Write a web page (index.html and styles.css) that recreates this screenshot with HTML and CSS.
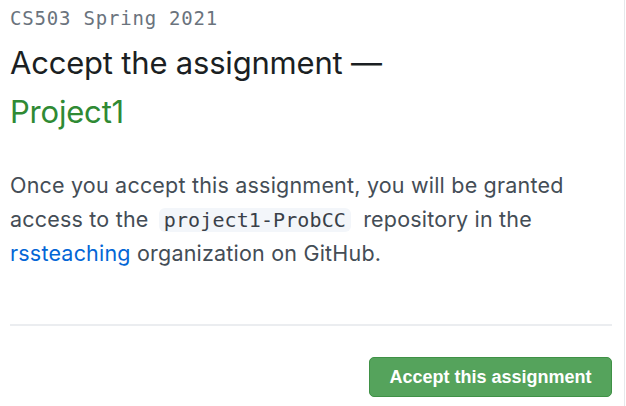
FILE: index.html
```html
<!DOCTYPE html>
<html>
<head>
<meta charset="utf-8">
<link rel="stylesheet" href="styles.css">
</head>
<body>
<div class="panel">
  <div class="course">CS503 Spring 2021</div>
  <h1 class="title">Accept the assignment —<span class="project">Project1</span></h1>
  <p class="desc">Once you accept this assignment, you will be granted access to the <code class="repo">project1-ProbCC</code> repository in the <a class="org" href="#">rssteaching</a> organization on GitHub.</p>
  <hr class="sep">
  <div class="actions">
    <button class="btn">Accept this assignment</button>
  </div>
</div>
</body>
</html>
```
FILE: styles.css
```css
html, body {
  margin: 0;
  padding: 0;
  background: #fff;
}
body {
  font-family: Inter, "Liberation Sans", Arial, sans-serif;
  width: 626px;
  height: 406px;
  overflow: hidden;
}
.panel {
  box-sizing: border-box;
  width: 625px;
  height: 406px;
  border-right: 1px solid #e6e8eb;
  padding: 5px 12px 0 10px;
}
.course {
  font-family: "DejaVu Sans Mono", monospace;
  font-size: 19px;
  line-height: 26px;
  color: #6a737d;
  letter-spacing: 0.8px;
}
.title {
  margin: 7px 0 0;
  font-size: 31px;
  font-weight: 400;
  line-height: 49px;
  color: #1b1f23;
  letter-spacing: -0.2px;
}
.project {
  display: block;
  color: #2f8a34;
}
.desc {
  margin: 32px 0 0;
  font-size: 21.5px;
  line-height: 34px;
  color: #444d56;
  width: 575px;
  letter-spacing: 0.2px;
}
.repo {
  font-family: "DejaVu Sans Mono", monospace;
  font-size: 20px;
  line-height: 24px;
  display: inline-block;
  background: #f3f6fa;
  border-radius: 6px;
  padding: 0 5px;
  margin: 0 6px 0 4px;
  color: #3a4048;
  letter-spacing: 0.1px;
}
.org {
  color: #0366d6;
  text-decoration: none;
}
.sep {
  margin: 54px 0 0;
  border: 0;
  height: 2px;
  background: #ebedf0;
}
.actions {
  display: flex;
  justify-content: flex-end;
  margin-top: 31px;
}
.btn {
  width: 243px;
  height: 40px;
  background: #55a35c;
  border: 1px solid #3f9146;
  border-radius: 5px;
  color: #fff;
  font-family: "Liberation Sans", Arial, sans-serif;
  font-weight: 700;
  font-size: 18px;
  padding: 0;
}
```
